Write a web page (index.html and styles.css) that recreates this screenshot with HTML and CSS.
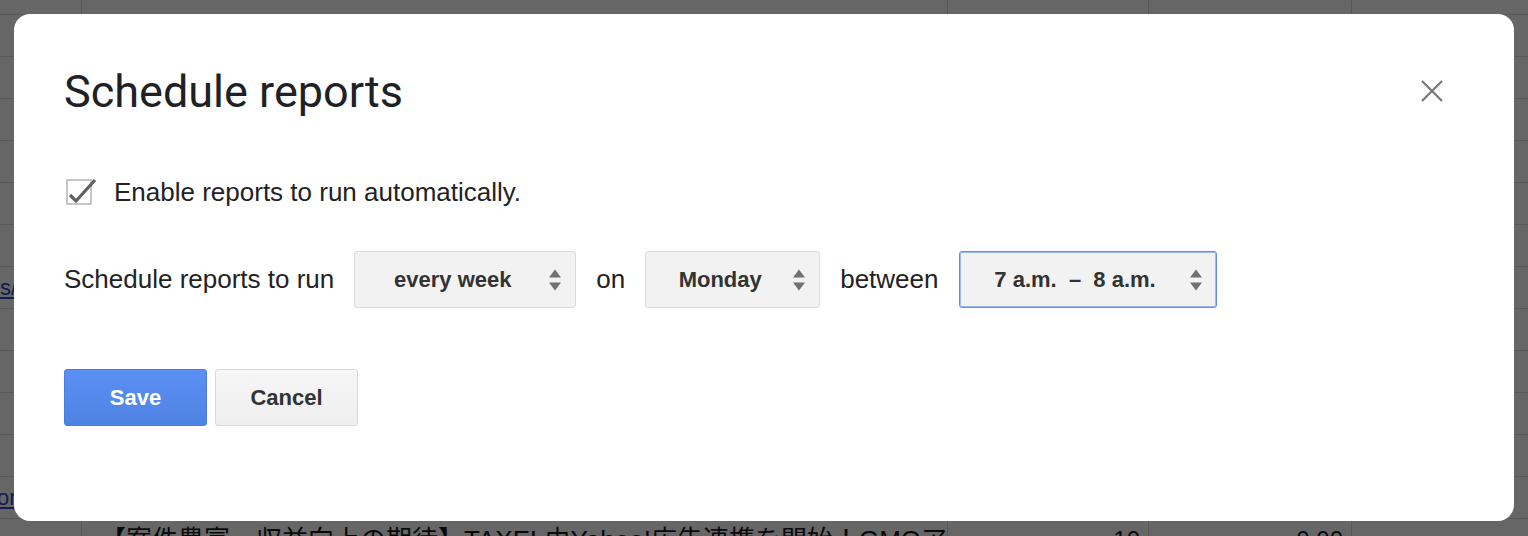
FILE: index.html
```html
<!DOCTYPE html>
<html lang="en">
<head>
<meta charset="utf-8">
<title>Schedule reports</title>
<link rel="stylesheet" href="styles.css">
</head>
<body>
<div class="sheet">
  <div class="row row-first"><div class="cell"></div><div class="cell"></div><div class="cell"></div><div class="cell"></div><div class="cell last"></div></div>
  <div class="row"><div class="cell"></div><div class="cell"></div><div class="cell"></div><div class="cell"></div><div class="cell last"></div></div>
  <div class="row"><div class="cell"></div><div class="cell"></div><div class="cell"></div><div class="cell"></div><div class="cell last"></div></div>
  <div class="row"><div class="cell"></div><div class="cell"></div><div class="cell"></div><div class="cell"></div><div class="cell last"></div></div>
  <div class="row"><div class="cell"></div><div class="cell"></div><div class="cell"></div><div class="cell"></div><div class="cell last"></div></div>
  <div class="row"><div class="cell"></div><div class="cell"></div><div class="cell"></div><div class="cell"></div><div class="cell last"></div></div>
  <div class="row"><div class="cell"></div><div class="cell"></div><div class="cell"></div><div class="cell"></div><div class="cell last"></div></div>
  <div class="row"><div class="cell"><a class="link" href="#">s/news/</a></div><div class="cell"></div><div class="cell"></div><div class="cell"></div><div class="cell last"></div></div>
  <div class="row"><div class="cell"></div><div class="cell"></div><div class="cell"></div><div class="cell"></div><div class="cell last"></div></div>
  <div class="row"><div class="cell"></div><div class="cell"></div><div class="cell"></div><div class="cell"></div><div class="cell last"></div></div>
  <div class="row"><div class="cell"></div><div class="cell"></div><div class="cell"></div><div class="cell"></div><div class="cell last"></div></div>
  <div class="row"><div class="cell"></div><div class="cell"></div><div class="cell"></div><div class="cell"></div><div class="cell last"></div></div>
  <div class="row"><div class="cell"><a class="link link-or" href="#">org/</a></div><div class="cell"></div><div class="cell"></div><div class="cell"></div><div class="cell last"></div></div>
  <div class="row"><div class="cell"></div><div class="cell cell-title">【案件豊富・収益向上の期待】TAXEL由Yahoo!広告連携を開始！GMOアドパートナーズ</div><div class="cell num">10</div><div class="cell num">0.00</div><div class="cell last"></div></div>
</div>

<div class="dialog" role="dialog" aria-labelledby="dlg-title">
  <div class="dialog-header">
    <h1 class="dialog-title" id="dlg-title">Schedule reports</h1>
    <button class="close-btn" aria-label="Close">
      <svg width="24" height="24" viewBox="0 0 24 24"><path d="M2 2L22 22M22 2L2 22" stroke="#777" stroke-width="2.2" fill="none"/></svg>
    </button>
  </div>

  <label class="check-row">
    <span class="checkbox">
      <svg class="checkmark" width="34" height="30" viewBox="0 0 34 30"><polyline points="3,17 9,23 28,2" fill="none" stroke="#616161" stroke-width="3.2"/></svg>
    </span>
    <span class="check-label">Enable reports to run automatically.</span>
  </label>

  <div class="schedule-row">
    <span>Schedule reports to run</span>
    <div class="select select-freq">
      <span class="select-value">every week</span>
      <svg class="arrows" width="14" height="26" viewBox="0 0 14 26"><path d="M1 10.5L7 2.5L13 10.5Z M1 15.5L7 23.5L13 15.5Z" fill="#707070"/></svg>
    </div>
    <span>on</span>
    <div class="select select-day">
      <span class="select-value">Monday</span>
      <svg class="arrows" width="14" height="26" viewBox="0 0 14 26"><path d="M1 10.5L7 2.5L13 10.5Z M1 15.5L7 23.5L13 15.5Z" fill="#707070"/></svg>
    </div>
    <span>between</span>
    <div class="select select-time is-focused">
      <span class="select-value">7 a.m.&nbsp; –&nbsp; 8 a.m.</span>
      <svg class="arrows" width="14" height="26" viewBox="0 0 14 26"><path d="M1 10.5L7 2.5L13 10.5Z M1 15.5L7 23.5L13 15.5Z" fill="#707070"/></svg>
    </div>
  </div>

  <div class="actions">
    <button class="btn btn-primary">Save</button>
    <button class="btn btn-secondary">Cancel</button>
  </div>
</div>
</body>
</html>
```
FILE: styles.css
```css
html, body {
  margin: 0;
  padding: 0;
}
body {
  width: 1528px;
  height: 536px;
  overflow: hidden;
  background: #666666;
  font-family: "Liberation Sans", Arial, sans-serif;
  position: relative;
}

/* dimmed spreadsheet behind the dialog */
.sheet {
  display: flex;
  flex-direction: column;
}
.row {
  display: grid;
  grid-template-columns: 82px 866px 201px 203px 1fr;
  height: 42px;
  flex: none;
  box-sizing: border-box;
  border-bottom: 1px solid #585858;
}
.row-first {
  height: 15px;
}
.cell {
  border-right: 1px solid #585858;
  overflow: hidden;
  white-space: nowrap;
  font-size: 22px;
  line-height: 41px;
  color: #0a0a0a;
}
.cell.last {
  border-right: none;
}
.link {
  color: #0f1d52;
  text-decoration: underline;
  display: inline-block;
}
.link-or {
  margin-left: -3px;
}
.cell-title {
  padding-left: 18px;
  font-family: "Liberation Sans", "Noto Sans CJK JP", sans-serif;
  font-size: 26px;
  line-height: 42px;
}
.num {
  text-align: right;
  padding-right: 8px;
  font-size: 24px;
  line-height: 42px;
}

/* dialog */
.dialog {
  position: absolute;
  left: 14px;
  top: 14px;
  width: 1500px;
  height: 507px;
  box-sizing: border-box;
  background: #ffffff;
  border-radius: 16px;
  padding: 52px 70px 0 50px;
  color: #222222;
}
.dialog-header {
  display: flex;
  align-items: center;
  justify-content: space-between;
}
.dialog-title {
  margin: 0;
  font-family: Roboto, "Open Sans", sans-serif;
  font-weight: 400;
  font-size: 45px;
  line-height: 52px;
  color: #202124;
  letter-spacing: 0;
}
.close-btn {
  border: 0;
  background: none;
  padding: 0;
  width: 24px;
  height: 24px;
  display: flex;
  margin-top: -3px;
  cursor: pointer;
}

.check-row {
  display: flex;
  align-items: center;
  gap: 22px;
  margin-top: 59px;
  height: 30px;
  font-size: 26px;
  line-height: 30px;
  color: #222222;
  padding-left: 2px;
}
.checkbox {
  width: 26px;
  height: 26px;
  box-sizing: border-box;
  border: 2px solid #c6c6c6;
  border-radius: 1px;
  position: relative;
  flex: none;
}
.checkmark {
  position: absolute;
  left: -1px;
  top: -3px;
  overflow: visible;
}

.schedule-row {
  display: flex;
  align-items: center;
  gap: 20px;
  margin-top: 44px;
  font-size: 26px;
  color: #222222;
}
.select {
  height: 57px;
  box-sizing: border-box;
  border: 1px solid #dadada;
  border-radius: 3px;
  background: #f2f2f2;
  display: flex;
  align-items: center;
  padding: 0 13px 0 15px;
  font-weight: bold;
  font-size: 22px;
  color: #333333;
}
.select-value {
  flex: 1;
  text-align: center;
  white-space: nowrap;
}
.arrows {
  flex: none;
  margin-left: 13px;
}
.select-freq { width: 222px; }
.select-day { width: 175px; }
.select-time { width: 258px; }
.select.is-focused {
  border-color: #5a8eef;
  box-shadow: inset 0 0 0 1px rgba(90, 142, 239, 0.55);
}

.actions {
  display: flex;
  gap: 8px;
  margin-top: 61px;
}
.btn {
  width: 143px;
  height: 57px;
  box-sizing: border-box;
  border-radius: 3px;
  font-family: "Liberation Sans", Arial, sans-serif;
  font-weight: bold;
  font-size: 22px;
  cursor: pointer;
  padding: 0;
}
.btn-primary {
  background: linear-gradient(#5c8ff3, #4f83e2);
  border: 1px solid #4a7ddf;
  color: #ffffff;
}
.btn-secondary {
  background: linear-gradient(#f6f6f6, #eeeeee);
  border: 1px solid #d9d9d9;
  color: #333333;
}
```
